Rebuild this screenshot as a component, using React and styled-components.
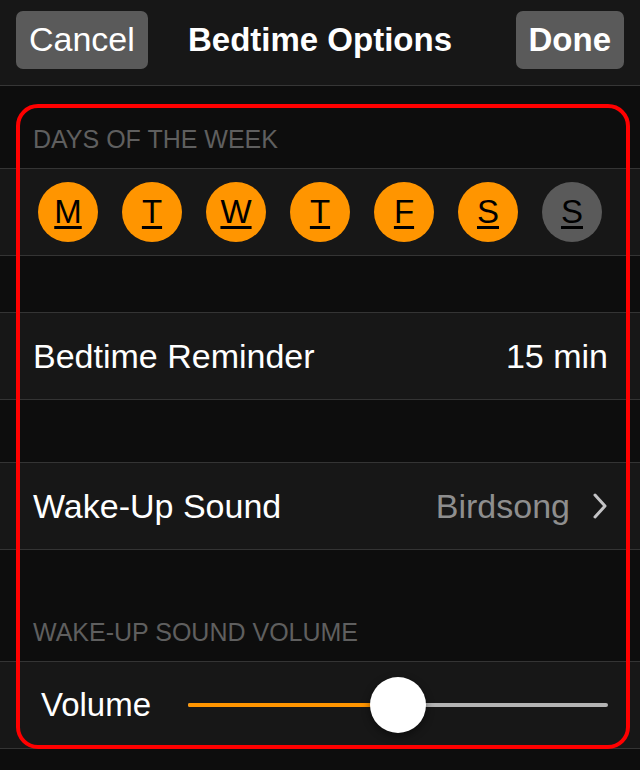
import React from 'react';
import styled, { createGlobalStyle } from 'styled-components';

const days = [
  { letter: 'M', on: true },
  { letter: 'T', on: true },
  { letter: 'W', on: true },
  { letter: 'T', on: true },
  { letter: 'F', on: true },
  { letter: 'S', on: true },
  { letter: 'S', on: false },
];

const volume = 0.5;

const App = () => {
  return (
    <React.Fragment>
      <GlobalStyle />
      <Screen>
        <NavBar>
          <NavButton>Cancel</NavButton>
          <NavTitle>Bedtime Options</NavTitle>
          <NavButton bold align="end">
            Done
          </NavButton>
        </NavBar>
        <Content>
          <Highlight />
          <SectionHeader height="83px">DAYS OF THE WEEK</SectionHeader>
          <DaysRow>
            {days.map((day, dayIdx) => (
              <DayCircle key={`${day.letter}${dayIdx}`} on={day.on}>
                {day.letter}
              </DayCircle>
            ))}
          </DaysRow>
          <Spacer height="57px" />
          <Row>
            <RowLabel>Bedtime Reminder</RowLabel>
            <RowValue>15 min</RowValue>
          </Row>
          <Spacer height="63px" />
          <Row>
            <RowLabel>Wake-Up Sound</RowLabel>
            <RowDetail>
              <RowValue muted>Birdsong</RowValue>
              <svg width="16" height="26" viewBox="0 0 16 26">
                <path
                  d="M3 2 L13 13 L3 24"
                  fill="none"
                  stroke="#c4c4c6"
                  strokeWidth="3"
                  strokeLinecap="round"
                  strokeLinejoin="round"
                />
              </svg>
            </RowDetail>
          </Row>
          <SectionHeader height="112px">WAKE-UP SOUND VOLUME</SectionHeader>
          <VolumeRow>
            <VolumeLabel>Volume</VolumeLabel>
            <Slider>
              <Track>
                <TrackFill style={{ width: `${volume * 100}%` }} />
                <Thumb style={{ left: `${volume * 100}%` }} />
              </Track>
            </Slider>
          </VolumeRow>
        </Content>
      </Screen>
    </React.Fragment>
  );
};

export default App;

const GlobalStyle = createGlobalStyle`
  * { box-sizing: border-box; }
  html, body {
    margin: 0;
    padding: 0;
    background: #0d0d0d;
  }
  body {
    font-family: "Liberation Sans", Arial, sans-serif;
    -webkit-font-smoothing: antialiased;
  }
`;

const Screen = styled.div`
  width: 640px;
  height: 770px;
  background: #0d0d0d;
  display: flex;
  flex-direction: column;
  overflow: hidden;
`;

const NavBar = styled.header`
  height: 86px;
  flex-shrink: 0;
  display: grid;
  grid-template-columns: 1fr auto 1fr;
  align-items: center;
  padding: 0 16px;
  background: #171717;
  border-bottom: 1px solid #363636;
`;

const NavButton = styled.button`
  justify-self: ${({ align }) => align || 'start'};
  height: 58px;
  padding: 0 13px;
  margin-top: -6px;
  border: none;
  border-radius: 7px;
  background: #5a5a5a;
  color: #ffffff;
  font-family: inherit;
  font-size: ${({ bold }) => (bold ? '33px' : '34px')};
  font-weight: ${({ bold }) => (bold ? 700 : 400)};
`;

const NavTitle = styled.h1`
  margin: -6px 0 0;
  font-size: 33px;
  font-weight: 700;
  color: #ffffff;
`;

const Content = styled.main`
  position: relative;
  display: flex;
  flex-direction: column;
`;

const Highlight = styled.div`
  position: absolute;
  left: 16px;
  top: 18px;
  width: 614px;
  height: 645px;
  border: 4px solid #ff0000;
  border-radius: 22px;
  pointer-events: none;
  z-index: 2;
`;

const SectionHeader = styled.div`
  height: ${({ height }) => height};
  display: flex;
  align-items: flex-end;
  padding: 0 33px 14px;
  font-size: 25px;
  color: #5f5f5f;
  border-bottom: 1px solid #343434;
`;

const Spacer = styled.div`
  height: ${({ height }) => height};
  border-bottom: 1px solid #343434;
`;

const DaysRow = styled.div`
  height: 87px;
  display: flex;
  align-items: center;
  justify-content: space-between;
  padding: 0 38px;
  background: #171717;
  border-bottom: 1px solid #343434;
`;

const DayCircle = styled.div`
  width: 60px;
  height: 60px;
  border-radius: 50%;
  display: flex;
  align-items: center;
  justify-content: center;
  background: ${({ on }) => (on ? '#ff9500' : '#5a5a5a')};
  color: #000000;
  font-size: 33px;
  text-decoration: underline;
  text-decoration-thickness: 3px;
  text-underline-offset: 3px;
`;

const Row = styled.div`
  height: 87px;
  display: flex;
  align-items: center;
  justify-content: space-between;
  padding: 0 32px 0 33px;
  background: #171717;
  border-bottom: 1px solid #343434;
`;

const RowLabel = styled.span`
  font-size: 34px;
  color: #ffffff;
`;

const RowDetail = styled.div`
  display: flex;
  align-items: center;
  gap: 22px;
`;

const RowValue = styled.span`
  font-size: 34px;
  color: ${({ muted }) => (muted ? '#8e8e8e' : '#ffffff')};
`;

const VolumeRow = styled.div`
  height: 87px;
  display: flex;
  align-items: center;
  padding: 0 32px 0 41px;
  background: #171717;
  border-bottom: 1px solid #343434;
`;

const VolumeLabel = styled.span`
  width: 147px;
  font-size: 33px;
  color: #ffffff;
`;

const Slider = styled.div`
  flex: 1;
  display: flex;
  align-items: center;
`;

const Track = styled.div`
  position: relative;
  width: 100%;
  height: 4px;
  border-radius: 2px;
  background: #b4b4b4;
`;

const TrackFill = styled.div`
  height: 100%;
  border-radius: 2px;
  background: #ff9500;
`;

const Thumb = styled.div`
  position: absolute;
  top: 50%;
  width: 56px;
  height: 56px;
  border-radius: 50%;
  background: #ffffff;
  transform: translate(-50%, -50%);
  box-shadow: 0 3px 8px rgba(0, 0, 0, 0.45);
`;
